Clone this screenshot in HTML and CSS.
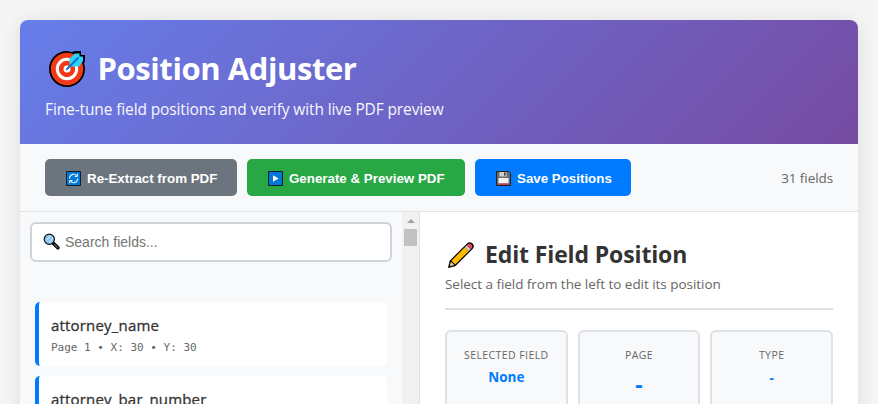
FILE: index.html
```html
<!DOCTYPE html>
<html lang="en">
<head>
<meta charset="utf-8">
<title>Position Adjuster</title>
<link rel="stylesheet" href="styles.css">
</head>
<body>
<div class="container">
  <header class="header">
    <h1 class="title">
      <svg class="icon-target" viewBox="0 0 44 44">
        <path d="M22 4C12 4 4 12 4 22s8 18 18 18 18-8 18-18c0-2-.3-4-1-5.500L40 14V8h-4V4h-6l-3 1z" fill="#000"/>
        <circle cx="22" cy="22" r="16.200" fill="#f03a17"/>
        <circle cx="22" cy="22" r="9.700" fill="none" stroke="#fff" stroke-width="3"/>
        <circle cx="22" cy="22" r="3.500" fill="#fff"/>
        <path d="M30 6.500h4.500v3H38v4.500l-4 5.500h-8l-1.500-2v-6z" fill="#31d2f7"/>
        <path d="M22 22L33 11" stroke="#0078d7" stroke-width="2" stroke-linecap="round"/>
      </svg>
      <span class="title-text">Position Adjuster</span>
    </h1>
    <p class="subtitle">Fine-tune field positions and verify with live PDF preview</p>
  </header>

  <div class="toolbar">
    <button class="btn btn-gray">
      <svg class="btn-icon" viewBox="0 0 17 17"><path d="M1.500 1.500h14v14h-14z" fill="#0078d7" stroke="#111c29"/><path d="M4.600 8.500V7.500a4 4 0 0 1 7.200-1.500M12.600 8.500v1a4 4 0 0 1-7.200 1.500" fill="none" stroke="#e6f3ff" stroke-width="1.200"/><path d="M9.700 6.500h2.800V3.700M7.500 10.500H4.700v2.800" fill="none" stroke="#e6f3ff"/></svg>
      <span class="btn-text">Re-Extract from PDF</span>
    </button>
    <button class="btn btn-green">
      <svg class="btn-icon" viewBox="0 0 17 17"><path d="M1.500 1.500h14v14h-14z" fill="#0078d7" stroke="#111c29"/><path d="M6 5.300v6.400l5.600-3.200z" fill="#fff"/></svg>
      <span class="btn-text">Generate &amp; Preview PDF</span>
    </button>
    <button class="btn btn-blue">
      <svg class="btn-icon" viewBox="0 0 17 17"><path d="M1.500 1.500h12l2 2v12h-14z" fill="#6b6b6b" stroke="#222"/><path d="M4.500 2h7v4.500h-7z" fill="#d0d0d0"/><path d="M9 2.500h1.500v3H9z" fill="#333"/><path d="M3.500 8h10v5.500h-10z" fill="#f4f4f4"/><path d="M3.500 13.500h10v1.200h-10z" fill="#d8294c"/></svg>
      <span class="btn-text">Save Positions</span>
    </button>
    <span class="count">31 fields</span>
  </div>

  <div class="main">
    <aside class="sidebar">
      <div class="list">
        <label class="search">
          <svg class="icon-search" viewBox="0 0 18 18"><path d="M10.500 10.500L14.900 14.700" stroke="#000" stroke-width="3.600" stroke-linecap="round"/><path d="M11.500 11.500L14.700 14.600" stroke="#666" stroke-width="1.300" stroke-linecap="round"/><circle cx="6.300" cy="6.300" r="5.100" fill="#86c5f2" stroke="#111" stroke-width="1.200"/><path d="M3.500 7.500l4-4.500M6 9.500L10 5" stroke="#b9e0fa" stroke-width="1.300"/></svg>
          <input class="search-input" type="text" placeholder="Search fields...">
        </label>
        <div class="items">
          <div class="item">
            <div class="item-name">attorney_name</div>
            <div class="item-meta">Page 1 • X: 30 • Y: 30</div>
          </div>
          <div class="item">
            <div class="item-name">attorney_bar_number</div>
          </div>
        </div>
      </div>
      <div class="scrollbar">
        <div class="scroll-arrow"></div>
        <div class="scroll-thumb"></div>
      </div>
    </aside>
    <section class="editor">
      <h2 class="editor-title">
        <svg class="icon-pencil" viewBox="0 0 28 28"><path d="M1 27L2.700 19.700 20 2.400Q22.500 0 25.600 2.400 28 5.500 25.600 8L8.300 25.300z" fill="#000"/><path d="M2.600 25.400L3.900 20.700 7.300 24.100z" fill="#e8c9a8"/><path d="M1.500 26.500l.7-2.800 2.100 2.100z" fill="#000"/><path d="M4.400 19.700L17.800 6.300 21.700 10.200 8.300 23.600z" fill="#ffb900"/><path d="M17.800 6.300l2-2 3.900 3.900-2 2z" fill="#ccc"/><path d="M19.800 4.300l1.300-1.200q1.800-1.200 3.500.3 1.500 1.800.3 3.600l-1.200 1.200z" fill="#e74856"/></svg>
        <span class="editor-title-text">Edit Field Position</span>
      </h2>
      <p class="editor-sub">Select a field from the left to edit its position</p>
      <div class="cards">
        <div class="card"><div class="card-label">SELECTED FIELD</div><div class="card-value small">None</div></div>
        <div class="card"><div class="card-label">PAGE</div><div class="card-value">-</div></div>
        <div class="card"><div class="card-label">TYPE</div><div class="card-value small dash">-</div></div>
      </div>
    </section>
  </div>
</div>
</body>
</html>
```
FILE: styles.css
```css
* { box-sizing: border-box; margin: 0; padding: 0; }
html, body { height: 404px; overflow: hidden; }
body {
  padding: 20px 20px 0;
  background: #f5f5f5;
  font-family: "Open Sans", "Noto Sans", sans-serif;
  color: #333;
}
.container {
  display: flex;
  flex-direction: column;
  height: 420px;
  border-radius: 8px;
  overflow: hidden;
  background: #fff;
  box-shadow: 0 2px 20px rgba(0, 0, 0, .1);
}
.header {
  flex: none;
  height: 124px;
  padding: 25px;
  background: linear-gradient(135deg, #667eea 0%, #764ba2 100%);
  color: #fff;
}
.title {
  display: flex;
  align-items: center;
  height: 48px;
  font-size: 31px;
  font-weight: 700;
}
.icon-target { flex: none; width: 44px; height: 44px; margin-right: 8.5px; }
.title-text { line-height: 46px; padding-bottom: 2px; letter-spacing: -.42px; }
.subtitle { margin-top: 5px; font-size: 15.5px; line-height: 22px; letter-spacing: -.12px; opacity: .95; }
.toolbar {
  display: flex;
  flex: none;
  align-items: center;
  gap: 10px;
  height: 68px;
  padding: 15px 25px;
  background: #f8f9fa;
  border-bottom: 1px solid #dee2e6;
}
.btn {
  display: flex;
  align-items: center;
  height: 37px;
  padding: 0 0 0 20px;
  border: 0;
  border-radius: 5px;
  color: #fff;
  font: 700 13.333px "Liberation Sans", sans-serif;
  white-space: nowrap;
}
.btn-icon { flex: none; width: 17px; height: 17px; margin: 1px 5px 0 0; }
.btn-text { padding-top: 1px; }
.btn-gray { width: 192px; background: #6c757d; }
.btn-green { width: 218px; background: #28a745; }
.btn-blue { width: 156px; background: #007bff; }
.count { margin-left: auto; font-size: 13.5px; letter-spacing: -.08px; color: #666; }
.main { display: flex; flex: 1; min-height: 0; overflow: hidden; }
.sidebar {
  display: flex;
  flex: none;
  width: 400px;
  background: #f8f9fa;
  border-right: 1px solid #dee2e6;
}
.list { flex: 1; padding: 10px; }
.search {
  display: flex;
  align-items: center;
  height: 40px;
  padding-left: 11px;
  background: #fff;
  border: 2px solid #ced4da;
  border-radius: 6px;
}
.icon-search { width: 18px; height: 18px; margin-right: 4px; flex: none; }
.search-input {
  flex: 1;
  border: 0;
  outline: 0;
  background: transparent;
  font: 14px "Liberation Sans", sans-serif;
}
.search-input::placeholder { color: #757575; }
.items { display: grid; gap: 10px; padding: 40px 5px 0; }
.item {
  height: 64px;
  padding: 12px 12px 0;
  background: #fff;
  border-left: 4px solid #007bff;
  border-radius: 5px;
}
.item-name {
  font-size: 15px;
  line-height: 22px;
  letter-spacing: .18px;
  -webkit-text-stroke: .3px #333;
}
.item-meta { margin-top: 4px; font: 11px/16px "DejaVu Sans Mono", monospace; color: #666; }
.scrollbar {
  display: flex;
  flex-direction: column;
  align-items: center;
  width: 17px;
  background: #f1f1f1;
}
.scroll-arrow {
  margin: 7px 0 6px;
  border: 4px solid transparent;
  border-top: 0;
  border-bottom-color: #a3a3a3;
}
.scroll-thumb { flex: none; width: 13px; height: 17px; background: #c1c1c1; }
.editor { flex: 1; padding: 25px 25px 0; }
.editor-title {
  display: flex;
  align-items: center;
  height: 36px;
  font-size: 23px;
}
.editor-title-text { line-height: 34px; padding-bottom: 2px; letter-spacing: -.13px; }
.icon-pencil { flex: none; width: 28px; height: 28px; margin: 0 10px 0 2px; }
.editor-sub {
  height: 37px;
  font-size: 13.5px;
  line-height: 22px;
  letter-spacing: -.04px;
  color: #666;
  border-bottom: 2px solid #dee2e6;
}
.cards { display: grid; grid-template-columns: repeat(3, 1fr); gap: 10px; margin-top: 20px; }
.card {
  height: 90px;
  padding-top: 15px;
  background: #f8f9fa;
  border: 2px solid #dee2e6;
  border-radius: 6px;
  text-align: center;
}
.card-label { font-size: 10.5px; line-height: 16px; letter-spacing: .42px; color: #666; }
.card-value { margin-top: 6px; font-size: 23px; font-weight: 700; line-height: 30px; color: #007bff; }
.card-value.small { margin-top: 5px; font-size: 13.5px; line-height: 19px; }
.card-value.dash { padding-top: 1px; }
```
